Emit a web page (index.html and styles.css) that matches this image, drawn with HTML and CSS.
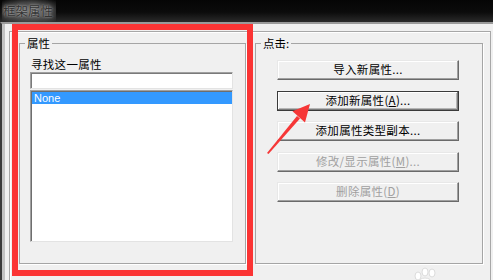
FILE: index.html
```html
<!DOCTYPE html>
<html lang="zh-CN">
<head>
<meta charset="utf-8">
<title>框架属性</title>
<link rel="stylesheet" href="styles.css">
</head>
<body>
<div class="screen">
  <div class="titlebar"><span class="title">框架属性</span></div>
  <div class="window">
    <div class="tabpage">
      <fieldset class="group group-left">
        <legend>属性</legend>
        <div class="field-label">寻找这一属性</div>
        <div class="textbox"></div>
        <div class="listbox">
          <div class="list-item selected">None</div>
        </div>
      </fieldset>
      <fieldset class="group group-right">
        <legend>点击:</legend>
        <div class="buttons">
          <div class="btn">导入新属性...</div>
          <div class="btn btn-default">添加新属性(<u>A</u>)...</div>
          <div class="btn">添加属性类型副本...</div>
          <div class="btn disabled">修改/显示属性(<u>M</u>)...</div>
          <div class="btn disabled">删除属性(<u>D</u>)</div>
        </div>
      </fieldset>
    </div>
  </div>
  <div class="highlight"></div>
  <svg class="annot" width="493" height="280" viewBox="0 0 493 280">
    <polygon points="267,153 268.5,154 300,118.5 297,116" fill="#f63737"/>
    <polygon points="310,104 292.5,111.2 305,122.6" fill="#f63737"/>
    <g fill="#ffffff" stroke="#dcdcdc" stroke-width="1">
      <ellipse cx="418" cy="276" rx="3" ry="4"/>
      <ellipse cx="425" cy="272" rx="3" ry="4"/>
      <ellipse cx="432" cy="273" rx="3" ry="4"/>
      <ellipse cx="425" cy="283" rx="7" ry="5"/>
    </g>
  </svg>
</div>
</body>
</html>
```

FILE: styles.css
```css
* { box-sizing: border-box; }

html, body {
  margin: 0;
  padding: 0;
}

body {
  width: 493px;
  height: 280px;
  overflow: hidden;
  background: #f0f0f0;
  font-family: "Noto Sans CJK SC", "Liberation Sans", sans-serif;
  font-size: 11.5px;
  color: #000;
}

.screen {
  position: relative;
  width: 493px;
  height: 280px;
}

.titlebar {
  height: 22px;
  background: linear-gradient(to bottom, #050505 0%, #0b0b0b 55%, #2a2a2a 100%);
  padding-left: 4px;
}

.title {
  display: inline-block;
  line-height: 22px;
  font-size: 12.5px;
  color: #333333;
  padding: 0 3px 0 1px;
  margin-left: -2px;
  background: radial-gradient(ellipse at center, rgba(110,110,110,0.95) 0%, rgba(90,90,90,0.7) 55%, rgba(40,40,40,0) 100%);
  text-shadow: 0 0 2px rgba(190,190,190,0.9), 0 0 5px rgba(150,150,150,0.8);
}

.window {
  height: 258px;
  border-top: 2px solid #9a9a9a;
  border-left: 2px solid #3a3a3a;
  box-shadow: inset 3px 0 0 #c2c2c2;
  padding: 7px 0 0 7px;
}

.tabpage {
  width: 482px;
  height: 260px;
  border: 1px solid #a7a7a7;
  border-bottom: none;
  box-shadow: inset 1px 1px 0 #ffffff;
  display: flex;
  gap: 9px;
  padding: 4px 0 0 9px;
}

.group {
  margin: 0;
  height: 228px;
  border: 1px solid #a5a5a5;
  box-shadow: 1px 1px 0 #ffffff;
  min-width: 0;
}

.group legend {
  padding: 0 2px;
  line-height: 14px;
  height: 14px;
}

.group-left {
  width: 227px;
  padding: 0 12px 0 10px;
}

.group-left legend { margin-left: -5px; }

.group-right {
  width: 228px;
  padding: 0 0 0 21px;
}

.group-right legend { margin-left: -16px; }

.field-label {
  margin-top: 6px;
  line-height: 16px;
  height: 16px;
  padding-left: 1px;
  letter-spacing: 0.3px;
}

.textbox {
  width: 203px;
  height: 17px;
  margin-bottom: 1px;
  background: #fff;
  border: 1px solid;
  border-color: #a0a0a0 #e3e3e3 #e3e3e3 #a0a0a0;
  box-shadow: inset 1px 1px 0 #7a7a7a;
}

.listbox {
  width: 203px;
  height: 152px;
  background: #fff;
  border: 1px solid;
  border-color: #a0a0a0 #e3e3e3 #e3e3e3 #a0a0a0;
  box-shadow: inset 1px 1px 0 #6e6e6e;
  padding: 1px 0 0 1px;
}

.list-item {
  height: 12px;
  line-height: 12px;
  padding-left: 2px;
  font-family: "Liberation Sans", "DejaVu Sans", sans-serif;
  font-size: 11px;
}

.list-item.selected {
  background: #3399ff;
  color: #ffffff;
}

.buttons {
  margin-top: 10px;
  display: flex;
  flex-direction: column;
  gap: 10.5px;
}

.btn {
  width: 182px;
  height: 20px;
  line-height: 17px;
  text-align: center;
  background: #f0f0f0;
  border: 1px solid;
  border-color: #e8e8e8 #6a6a6a #6a6a6a #e8e8e8;
  box-shadow: inset -1px -1px 0 #a0a0a0, inset 1px 1px 0 #ffffff;
  letter-spacing: 0.3px;
}

.btn-default {
  border-color: #3a3a3a;
  box-shadow: inset -1px -1px 0 #7a7a7a, inset 1px 1px 0 #ffffff, inset -2px -2px 0 #b5b5b5;
}

.btn.disabled {
  color: #a0a0a0;
}

.btn u {
  text-decoration: underline;
  text-underline-offset: 1px;
}

.highlight {
  position: absolute;
  left: 12px;
  top: 24px;
  width: 241px;
  height: 252px;
  border: 6px solid #fb3434;
}

.annot {
  position: absolute;
  left: 0;
  top: 0;
  pointer-events: none;
}
```
